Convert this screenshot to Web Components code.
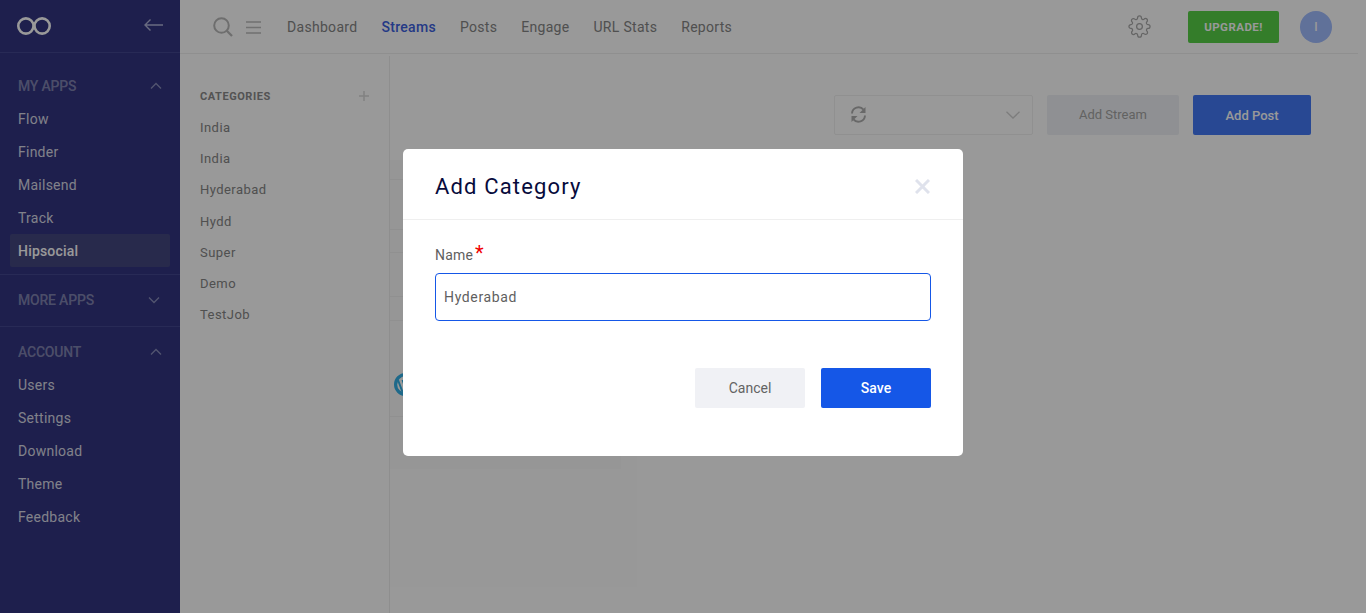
<!DOCTYPE html>
<html>
<head>
<meta charset="utf-8">
<title>Add Category</title>
<style>
  html, body { margin: 0; height: 100%; overflow: hidden; }
  body { font-family: Roboto, "Liberation Sans", sans-serif; background: #fff; }
</style>
</head>
<body>
<app-shell>
  <app-sidebar slot="sidebar">
    <side-group title="MY APPS" open>
      <side-item>Flow</side-item>
      <side-item>Finder</side-item>
      <side-item>Mailsend</side-item>
      <side-item>Track</side-item>
      <side-item active>Hipsocial</side-item>
    </side-group>
    <side-group title="MORE APPS"></side-group>
    <side-group title="ACCOUNT" open last>
      <side-item>Users</side-item>
      <side-item>Settings</side-item>
      <side-item>Download</side-item>
      <side-item>Theme</side-item>
      <side-item>Feedback</side-item>
    </side-group>
  </app-sidebar>
  <top-bar slot="top"></top-bar>
  <category-panel slot="left"></category-panel>
  <stream-panel slot="content"></stream-panel>
</app-shell>
<add-category-dialog></add-category-dialog>

<script>
class AppShell extends HTMLElement {
  constructor() {
    super();
    this.attachShadow({ mode: "open" }).innerHTML = `
      <style>
        :host { display: grid; grid-template-columns: 180px 1fr; height: 613px; overflow: hidden; }
        .main { display: flex; flex-direction: column; min-width: 0; }
        .body { display: flex; flex: 1; margin-top: 2px; min-height: 0; }
      </style>
      <slot name="sidebar"></slot>
      <div class="main">
        <slot name="top"></slot>
        <div class="body">
          <slot name="left"></slot>
          <slot name="content"></slot>
        </div>
      </div>`;
  }
}

class AppSidebar extends HTMLElement {
  constructor() {
    super();
    this.attachShadow({ mode: "open" }).innerHTML = `
      <style>
        :host { display: block; background: #323580; }
        .head { display: flex; align-items: center; justify-content: space-between; height: 52px; padding: 0 17px; border-bottom: 1px solid #44478f; margin-bottom: 8px; }
        svg { display: block; }
      </style>
      <div class="head">
        <svg width="34" height="18" viewBox="0 0 34 18" fill="none" stroke="#fff" stroke-width="2.600">
          <circle cx="8.900" cy="9" r="7.600"/>
          <circle cx="25.100" cy="9" r="7.600"/>
        </svg>
        <svg width="19" height="12" viewBox="0 0 19 12" fill="none" stroke="#b0b2d6" stroke-width="1.400" style="margin-top:-3px">
          <path d="M19 6H1M6.500 .5L1 6l5.500 5.500"/>
        </svg>
      </div>
      <slot></slot>`;
  }
}

class SideGroup extends HTMLElement {
  connectedCallback() {
    const open = this.hasAttribute("open");
    const chevron = open ? "M1 6.500L6 1.500l5 5" : "M1 1.500l5 5 5-5";
    this.attachShadow({ mode: "open" }).innerHTML = `
      <style>
        :host { display: block; padding: 12px 0 ${open ? 7 : 13}px; border-bottom: 1px solid #44478f; }
        :host([last]) { border-bottom: 0; }
        .title { display: flex; align-items: center; justify-content: space-between; height: 26px; margin-bottom: 3px; padding: 0 18px; font-size: 14px; font-weight: 500; letter-spacing: -.2px; color: rgba(255,255,255,.4); }
        :host(:not([open])) .title { margin-bottom: 0; }
        svg { display: block; margin-right: ${open ? 0 : 2}px; }
      </style>
      <div class="title">
        <span>${this.getAttribute("title")}</span>
        <svg width="12" height="8" viewBox="0 0 12 8" fill="none" stroke="#8a8dba" stroke-width="1.300"><path d="${chevron}"/></svg>
      </div>
      <slot></slot>`;
    this.removeAttribute("title");
  }
}

class SideItem extends HTMLElement {
  constructor() {
    super();
    this.attachShadow({ mode: "open" }).innerHTML = `
      <style>
        :host { display: block; height: 33px; line-height: 35px; margin: 0 10px; padding: 0 8px; font-size: 14px; letter-spacing: .25px; color: rgba(255,255,255,.82); border-radius: 2px; overflow: hidden; }
        :host([active]) { background: #44467f; color: #fff; font-weight: 500; letter-spacing: .2px; }
      </style>
      <slot></slot>`;
  }
}

class TopBar extends HTMLElement {
  constructor() {
    super();
    const links = ["Dashboard", "Streams", "Posts", "Engage", "URL Stats", "Reports"];
    this.attachShadow({ mode: "open" }).innerHTML = `
      <style>
        :host { display: flex; align-items: center; height: 53px; margin-right: 8px; padding-left: 33px; padding-right: 26px; border-bottom: 1px solid #efefef; font-size: 14px; }
        svg { display: block; flex: none; }
        .burger { margin-left: 13px; margin-top: 2px; }
        nav { display: flex; gap: 24px; margin-left: 26px; letter-spacing: .3px; color: #858585; }
        nav a.on { color: #3c61e0; font-weight: 500; letter-spacing: .3px; }
        .gear { margin-left: auto; }
        .upgrade { width: 91px; height: 32px; margin-left: 37px; border: 0; border-radius: 2px; background: #54d044; color: #fff; font: 700 11.500px Roboto, sans-serif; letter-spacing: .45px; opacity: .98; }
        .avatar { display: flex; align-items: center; justify-content: center; width: 32px; height: 32px; margin-left: 21px; border-radius: 50%; background: #a0bcff; color: #fff; font-size: 12px; font-weight: 500; }
      </style>
      <svg width="20" height="20" viewBox="0 0 20 20" fill="none" stroke="#b8b8b8" stroke-width="2">
        <circle cx="8.500" cy="8.500" r="7.300"/><path d="M13.800 13.800L19 19" stroke-width="2.300"/>
      </svg>
      <svg class="burger" width="15" height="13" viewBox="0 0 15 13" fill="none" stroke="#bcbcbc" stroke-width="1.300">
        <path d="M0 1h15M0 6.500h15M0 12h15"/>
      </svg>
      <nav>${links.map(l => `<a class="${l === "Streams" ? "on" : ""}">${l}</a>`).join("")}</nav>
      <svg class="gear" width="23" height="23" viewBox="0 0 24 24" fill="none" stroke="#a8a8a8" stroke-width="1.300">
        <circle cx="12" cy="12" r="3"/>
        <path d="M19.4 15a1.65 1.65 0 0 0 .33 1.82l.06.06a2 2 0 0 1 0 2.83 2 2 0 0 1-2.83 0l-.06-.06a1.65 1.65 0 0 0-1.82-.33 1.65 1.65 0 0 0-1 1.51V21a2 2 0 0 1-2 2 2 2 0 0 1-2-2v-.09A1.65 1.65 0 0 0 9 19.4a1.65 1.65 0 0 0-1.82.33l-.06.06a2 2 0 0 1-2.83 0 2 2 0 0 1 0-2.83l.06-.06a1.65 1.65 0 0 0 .33-1.82 1.65 1.65 0 0 0-1.51-1H3a2 2 0 0 1-2-2 2 2 0 0 1 2-2h.09A1.65 1.65 0 0 0 4.600 9a1.65 1.65 0 0 0-.33-1.82l-.06-.06a2 2 0 0 1 0-2.83 2 2 0 0 1 2.83 0l.06.06a1.65 1.65 0 0 0 1.82.33H9a1.65 1.65 0 0 0 1-1.51V3a2 2 0 0 1 2-2 2 2 0 0 1 2 2v.09a1.65 1.65 0 0 0 1 1.51 1.65 1.65 0 0 0 1.82-.33l.06-.06a2 2 0 0 1 2.83 0 2 2 0 0 1 0 2.83l-.06.06a1.65 1.65 0 0 0-.33 1.82V9a1.65 1.65 0 0 0 1.51 1H21a2 2 0 0 1 2 2 2 2 0 0 1-2 2h-.09a1.65 1.65 0 0 0-1.51 1z"/>
      </svg>
      <button class="upgrade">UPGRADE!</button>
      <div class="avatar">I</div>`;
  }
}

class CategoryPanel extends HTMLElement {
  constructor() {
    super();
    const names = ["India", "India", "Hyderabad", "Hydd", "Super", "Demo", "TestJob"];
    this.attachShadow({ mode: "open" }).innerHTML = `
      <style>
        :host { display: block; flex: none; box-sizing: border-box; width: 210px; padding: 30px 20px 0; border-right: 1px solid #ededed; }
        .head { display: flex; align-items: center; justify-content: space-between; height: 20px; margin-bottom: 6px; font-size: 11px; font-weight: 700; letter-spacing: .55px; color: #8a8a8a; }
        svg { display: block; }
        .item { height: 31.2px; line-height: 31px; font-size: 13px; letter-spacing: .45px; color: #858585; }
      </style>
      <div class="head">
        <span>CATEGORIES</span>
        <svg width="10" height="10" viewBox="0 0 10 10" stroke="#d8d8d8" stroke-width="1.500"><path d="M5 0v10M0 5h10"/></svg>
      </div>
      ${names.map(n => `<div class="item">${n}</div>`).join("")}`;
  }
}

class StreamPanel extends HTMLElement {
  constructor() {
    super();
    const wp = `<svg width="23" height="23" viewBox="0 0 23 23" style="margin-top:52px">
        <circle cx="11.500" cy="11.500" r="9.900" fill="#fff" stroke="#32b0e6" stroke-width="3.200"/>
        <path d="M4 7l4.500 12M8.500 7L13 19" fill="none" stroke="#32b0e6" stroke-width="2"/>
      </svg>`;
    const rows = [20, 50, 23, 44, 24, 96];
    this.attachShadow({ mode: "open" }).innerHTML = `
      <style>
        :host { display: block; flex: 1; min-width: 0; padding-top: 39px; }
        .tools { display: flex; justify-content: flex-end; gap: 14px; padding-right: 55px; }
        .select { display: flex; align-items: center; justify-content: space-between; box-sizing: border-box; width: 199px; height: 40px; padding: 0 12px 0 15px; border: 1px solid #f0f0f0; border-radius: 2px; }
        svg { display: block; }
        .sync { margin-top: -1px; }
        button { height: 40px; border: 0; border-radius: 2px; font: 13px Roboto, sans-serif; }
        .stream { width: 132px; padding-bottom: 2px; background: #eff1f5; color: #a4a4a4; }
        .post { width: 118px; padding-top: 2px; background: #4479f5; color: #fff; font-weight: 500; }
        .board { box-sizing: border-box; width: 247px; height: 427px; margin-top: 25px; background: #fdfdfd; }
        .card { box-sizing: border-box; width: 231px; height: 309px; background: #fafafa; }
        .row { box-sizing: border-box; border-bottom: 1px solid #f0f0f0; display: flex; align-items: flex-start; padding-left: 4px; }
      </style>
      <div class="tools">
        <div class="select">
          <svg class="sync" width="17" height="17" viewBox="0 0 17 17" fill="#adadad" stroke="none">
            <path d="M2 7.500A6.500 6.500 0 0 1 13.500 3.700" fill="none" stroke="#adadad" stroke-width="1.900"/>
            <path d="M15.500 1v6h-6z"/>
            <path d="M15 9.500A6.500 6.500 0 0 1 3.500 13.300" fill="none" stroke="#adadad" stroke-width="1.900"/>
            <path d="M1.500 16v-6h6z"/>
          </svg>
          <svg width="14" height="8" viewBox="0 0 14 8" fill="none" stroke="#d0d0d0" stroke-width="1.300"><path d="M.5 .8L7 7l6.500-6.200"/></svg>
        </div>
        <button class="stream">Add Stream</button>
        <button class="post">Add Post</button>
      </div>
      <div class="board">
        <div class="card">
          ${rows.map((h, i) => `<div class="row" style="height:${h}px">${i === 5 ? wp : ""}</div>`).join("")}
          <div class="row" style="height:52px;border:0"></div>
        </div>
      </div>`;
  }
}

class AddCategoryDialog extends HTMLElement {
  constructor() {
    super();
    this.attachShadow({ mode: "open" }).innerHTML = `
      <style>
        :host { position: fixed; inset: 0; display: flex; justify-content: center; align-items: flex-start; box-sizing: border-box; padding-top: 149px; background: rgba(0,0,0,.4); }
        .modal { box-sizing: border-box; width: 560px; height: 307px; background: #fff; border-radius: 5px; }
        .head { display: flex; align-items: center; justify-content: space-between; box-sizing: border-box; height: 71px; padding: 4px 32px 0; border-bottom: 1px solid #efefef; }
        h2 { margin: 0; font-size: 22px; font-weight: 400; letter-spacing: 1.15px; color: #070b3c; }
        svg { display: block; }
        .body { padding: 23px 32px 0; }
        label { display: flex; align-items: flex-start; height: 30px; line-height: 25px; font-size: 14px; letter-spacing: .2px; color: #5f5f5f; }
        label b { margin-left: 2px; font-size: 20px; line-height: 20px; font-weight: 400; color: #f00000; }
        .field { box-sizing: border-box; height: 48px; line-height: 46px; padding: 0 8px; border: 1px solid #1557e7; border-radius: 4px; font-size: 14px; letter-spacing: .65px; color: #5f5f5f; outline: 0; }
        .foot { display: flex; justify-content: flex-end; gap: 16px; margin-top: 47px; }
        button { width: 110px; height: 40px; border: 0; border-radius: 2px; font: 14px Roboto, sans-serif; }
        .cancel { background: #f0f1f5; color: #636363; }
        .save { background: #1557e7; color: #fff; font-weight: 500; }
      </style>
      <div class="modal" role="dialog">
        <div class="head">
          <h2>Add Category</h2>
          <svg width="15" height="15" viewBox="0 0 15 15" stroke="#dfe2ec" stroke-width="3" style="margin-right:1px"><path d="M1 1l13 13M14 1L1 14"/></svg>
        </div>
        <div class="body">
          <label>Name<b>*</b></label>
          <div class="field" role="textbox" contenteditable="true">Hyderabad</div>
          <div class="foot">
            <button class="cancel">Cancel</button>
            <button class="save">Save</button>
          </div>
        </div>
      </div>`;
  }
}

customElements.define("app-shell", AppShell);
customElements.define("app-sidebar", AppSidebar);
customElements.define("side-group", SideGroup);
customElements.define("side-item", SideItem);
customElements.define("top-bar", TopBar);
customElements.define("category-panel", CategoryPanel);
customElements.define("stream-panel", StreamPanel);
customElements.define("add-category-dialog", AddCategoryDialog);
</script>
</body>
</html>
